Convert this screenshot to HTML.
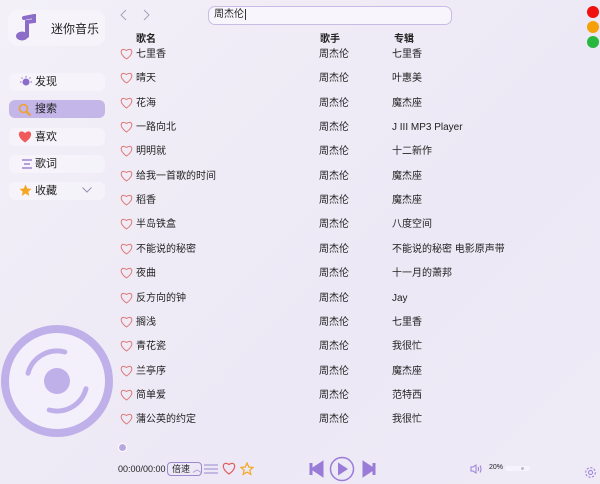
<!DOCTYPE html><html><head><meta charset="utf-8"><style>
*{margin:0;padding:0;box-sizing:border-box}
body{width:600px;height:484px;overflow:hidden;font-family:"Liberation Sans","Noto Sans CJK SC",sans-serif;background:linear-gradient(135deg,#f3f0f8,#ece8f5 60%,#eeeaf6);position:relative;color:#222;font-size:10px}
.a{position:absolute;white-space:nowrap}
.nav{position:absolute;left:9px;width:96px;height:18px;border-radius:6px;background:rgba(255,255,255,.35);font-size:11px;line-height:18px;padding-left:26px}
.row{position:absolute;left:120px;width:420px;height:16px;font-size:10px;line-height:16px;white-space:nowrap}
.row svg{position:absolute;left:0;top:1px}
.row .t{position:absolute;left:16px}.row .s{position:absolute;left:199px}.row .b{position:absolute;left:272px}
</style></head><body>
<div class="a" style="left:8px;top:10px;width:97px;height:36px;border-radius:10px;background:rgba(255,255,255,.35)"></div>
<svg class="a" style="left:14px;top:14px" width="22" height="28" viewBox="0 0 22 28"><path d="M10 4 L20 2 L20 7 L13 8 L13 22" stroke="#8b6cc8" stroke-width="4" fill="none" stroke-linecap="round"/><ellipse cx="8" cy="22" rx="6" ry="4.5" fill="#8b6cc8"/></svg>
<div class="a" style="left:51px;top:20px;font-size:12px">迷你音乐</div>
<div class="nav" style="top:73px">发现</div>
<svg class="a" style="left:20px;top:76px" width="12" height="12"><circle cx="6" cy="6" r="3.5" fill="#8b6cc8"/><path d="M6 0v1.5M0 6h1.5M10.5 6H12M1.5 1.5l1 1M10.5 1.5l-1 1" stroke="#8b6cc8"/></svg>
<div class="nav" style="top:100px;background:#c4b6e8">搜索</div>
<svg class="a" style="left:18px;top:103px" width="14" height="14"><circle cx="5.5" cy="5.5" r="4" stroke="#f0a030" stroke-width="1.6" fill="none"/><path d="M8.5 8.5l4 4" stroke="#f0a030" stroke-width="2"/></svg>
<div class="nav" style="top:128px">喜欢</div>
<svg class="a" style="left:18px;top:130px" width="14" height="13"><path d="M7 12.5C-3 6 1-2 7 3 13-2 17 6 7 12.5Z" fill="#f05a5a"/></svg>
<div class="nav" style="top:155px">歌词</div>
<svg class="a" style="left:22px;top:159px" width="10" height="10"><path d="M0 1h10M2 5h6M0 9h10" stroke="#8b6cc8" stroke-width="1.2"/></svg>
<div class="nav" style="top:182px">收藏</div>
<svg class="a" style="left:19px;top:184px" width="13" height="13"><path d="M6.5 0.5l1.8 4 4.2.4-3.2 2.8 1 4.2-3.8-2.3-3.8 2.3 1-4.2L0.5 4.9l4.2-.4z" fill="#f5a623"/></svg>
<svg class="a" style="left:82px;top:187px" width="10" height="6"><path d="M0.5 0.5L5 5 9.5 0.5" stroke="#9a90b0" fill="none"/></svg>
<svg class="a" style="left:0;top:324px" width="115" height="115"><circle cx="57" cy="57" r="52" fill="#f4f0fb" stroke="#c0b0ea" stroke-width="8"/><circle cx="57" cy="57" r="13" fill="#c0b0ea"/><path d="M57 27A30 30 0 0 0 27 57" stroke="#c0b0ea" stroke-width="5" fill="none" stroke-linecap="round" transform="rotate(15 57 57)"/><path d="M57 87A30 30 0 0 0 87 57" stroke="#c0b0ea" stroke-width="5" fill="none" stroke-linecap="round" transform="rotate(15 57 57)"/></svg>
<svg class="a" style="left:120px;top:9px" width="30" height="12"><path d="M6 1L1 6l5 5M24 1l5 5-5 5" stroke="#a8a0b8" fill="none"/></svg>
<div class="a" style="left:208px;top:6px;width:244px;height:19px;border:1.5px solid #c8bce6;border-radius:7px;background:#f8f6fc;font-size:10px;line-height:16px;padding-left:5px">周杰伦<span style="border-left:1px solid #333;margin-left:1px"></span></div>
<div class="a" style="left:587px;top:6px;width:12px;height:12px;border-radius:6px;background:#f01010"></div>
<div class="a" style="left:587px;top:21px;width:12px;height:12px;border-radius:6px;background:#f5a00a"></div>
<div class="a" style="left:587px;top:36px;width:12px;height:12px;border-radius:6px;background:#28b840"></div>
<div class="a" style="left:136px;top:30px;font-weight:bold;font-size:10px">歌名</div>
<div class="a" style="left:320px;top:30px;font-weight:bold;font-size:10px">歌手</div>
<div class="a" style="left:394px;top:30px;font-weight:bold;font-size:10px">专辑</div>
<div id="rows"></div>
<script>
var d=[["七里香","七里香"],["晴天","叶惠美"],["花海","魔杰座"],["一路向北","J III MP3 Player"],["明明就","十二新作"],["给我一首歌的时间","魔杰座"],["稻香","魔杰座"],["半岛铁盒","八度空间"],["不能说的秘密","不能说的秘密 电影原声带"],["夜曲","十一月的萧邦"],["反方向的钟","Jay"],["搁浅","七里香"],["青花瓷","我很忙"],["兰亭序","魔杰座"],["简单爱","范特西"],["蒲公英的约定","我很忙"]];
var h="";d.forEach(function(r,i){var y=47+i*24.35;h+='<div class="row" style="top:'+y+'px"><svg width="13" height="12"><path d="M6.5 11C-2 5.5 1-1.5 6.5 2.5 12-1.5 15 5.5 6.5 11Z" fill="none" stroke="#e07878"/></svg><span class="t">'+r[0]+'</span><span class="s">周杰伦</span><span class="b">'+r[1]+'</span></div>'});document.getElementById("rows").innerHTML=h;
</script>
<div class="a" style="left:119px;top:444px;width:7px;height:7px;border-radius:4px;background:#b8a8e0;box-shadow:0 0 0 1px #fff"></div>
<div class="a" style="left:118px;top:464px;font-size:9px">00:00/00:00</div>
<div class="a" style="left:167px;top:462px;width:35px;height:14px;border:1px solid #9a88d0;border-radius:4px;font-size:9px;line-height:12px;padding-left:4px">倍速 <span style="color:#9a88d0">︿</span></div>
<svg class="a" style="left:204px;top:463px" width="14" height="12"><path d="M0 2h14M0 6h14M0 10h14" stroke="#9a88d0"/></svg>
<svg class="a" style="left:222px;top:462px" width="14" height="13"><path d="M7 12C-2 6 1-1.5 7 2.5 13-1.5 16 6 7 12Z" fill="none" stroke="#e06060" stroke-width="1.2"/></svg>
<svg class="a" style="left:240px;top:462px" width="14" height="14"><path d="M7 1l1.8 4 4.2.4-3.2 2.8 1 4.2L7 10.1 3.2 12.4l1-4.2L1 5.4l4.2-.4z" fill="none" stroke="#f5a623" stroke-width="1.2"/></svg>
<svg class="a" style="left:308px;top:456px" width="70" height="26"><path d="M3 7v12M5 13l9-6v12z" stroke="#9a7cd8" stroke-width="3" fill="#9a7cd8"/><circle cx="34" cy="13" r="11.5" fill="none" stroke="#9a7cd8" stroke-width="1.5"/><path d="M30 6.5v13l10-6.5z" fill="#9a7cd8"/><path d="M56 7l9 6-9 6zM66 7v12" stroke="#9a7cd8" stroke-width="3" fill="#9a7cd8"/></svg>
<svg class="a" style="left:470px;top:464px" width="12" height="10"><path d="M1 3h2l3-2v8L3 7H1z" fill="none" stroke="#9a7cd8"/><path d="M8 3q1 2 0 4M10 1.5q2 3.5 0 7" fill="none" stroke="#9a7cd8"/></svg>
<div class="a" style="left:489px;top:464px;font-size:7px">20%</div>
<div class="a" style="left:505px;top:466px;width:25px;height:5px;border-radius:3px;background:#f6f4fa"></div>
<div class="a" style="left:521px;top:467px;width:3px;height:3px;border-radius:2px;background:#c0b8d0"></div>
<svg class="a" style="left:584px;top:466px" width="13" height="13"><circle cx="6.5" cy="6.5" r="2" fill="none" stroke="#9a7cd8"/><circle cx="6.5" cy="6.5" r="4.8" fill="none" stroke="#9a7cd8" stroke-dasharray="2.2 1.5"/></svg>
</body></html>
